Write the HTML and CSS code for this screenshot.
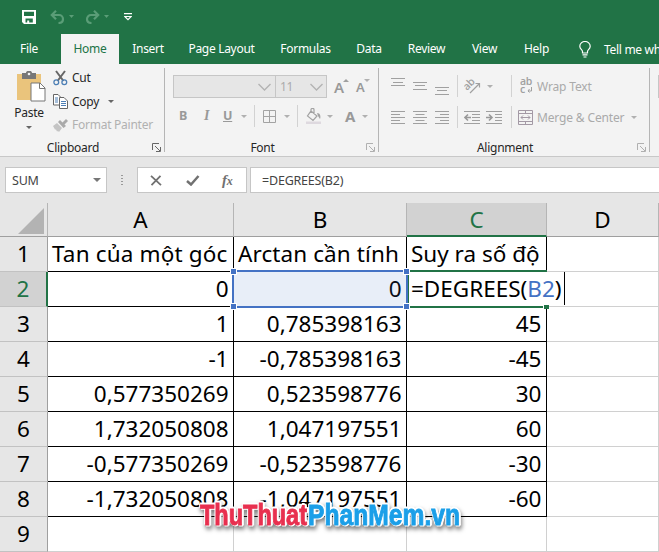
FILE: index.html
```html
<!DOCTYPE html>
<html lang="vi">
<head>
  <meta charset="UTF-8">
  <meta name="viewport" content="width=device-width, initial-scale=1.0">
  <title>Excel - DEGREES</title>
  <link rel="stylesheet" href="styles.css">
</head>
<body>
  <div class="excel">
    <!-- Quick access bar -->
    <div class="quick-bar">
      <svg class="icon-save" width="14" height="14" viewBox="0 0 14 14"><path d="M0 0h14v14H2L0 12zM2 1.7V6h10V1.7zM3.500 8.500v4h1.700v-2h2v2h3.600v-4z" fill="#fff" fill-rule="evenodd"/></svg>
      <svg class="icon-undo" width="26" height="14" viewBox="0 0 26 14"><path d="M6 .8L1.800 5 6 9.200M2 5H9a4 4 0 0 1 4 4c0 2.500-1.500 4-4.500 4" fill="none" stroke="#5a9d77" stroke-width="2.200"/><path d="M19 5h5l-2.500 3z" fill="#5a9d77"/></svg>
      <svg class="icon-redo" width="26" height="14" viewBox="0 0 26 14"><path d="M9 .8L13.200 5 9 9.200M13 5H6a4 4 0 0 0-4 4c0 2.500 1.500 4 4.500 4" fill="none" stroke="#5a9d77" stroke-width="2.200"/><path d="M19 5h5l-2.500 3z" fill="#5a9d77"/></svg>
      <svg class="icon-more" width="8" height="8" viewBox="0 0 8 8"><path d="M0 .6h8M.8 3.500L4 6.700 7.200 3.500z" fill="none" stroke="#fff" stroke-width="1.100"/></svg>
    </div>

    <!-- Tabs -->
    <div class="tabs">
      <span class="tab">File</span>
      <span class="tab active">Home</span>
      <span class="tab">Insert</span>
      <span class="tab">Page Layout</span>
      <span class="tab">Formulas</span>
      <span class="tab">Data</span>
      <span class="tab">Review</span>
      <span class="tab">View</span>
      <span class="tab">Help</span>
      <svg class="icon-bulb" width="12" height="17" viewBox="0 0 12 17"><path d="M3.500 12V10.500C3.500 9 .8 8 .8 5.200a5.200 4.700 0 0 1 10.400 0C11.200 8 8.500 9 8.500 10.500V12zM3.500 13.800h5M4.500 16h3" fill="none" stroke="#fff" stroke-width="1.200"/></svg>
      <span class="tell-me">Tell me what</span>
    </div>

    <!-- Ribbon -->
    <div class="ribbon">
      <div class="group clipboard">
        <div class="group-body">
          <div class="paste">
            <svg width="30" height="31" viewBox="0 0 30 31"><path d="M1 3h24v26H1z" fill="#eac47c"/><path d="M6 2h4c0-3 6-3 6 0h4v6H6z" fill="#777"/><circle cx="13" cy="3" r="1.300" fill="#f3f3f3"/><path d="M15 12h9l5 5v13H15z" fill="#fff" stroke="#777"/><path d="M23.500 12v5.500H29" fill="none" stroke="#777"/></svg>
            <span>Paste</span>
            <i class="arrow dark"></i>
          </div>
          <div class="clip-list">
            <div class="clip-item">
              <svg width="15" height="16" viewBox="0 0 15 16"><path d="M3 1l7.500 10M12 1L4.500 11" stroke="#666" stroke-width="2" fill="none"/><circle cx="3.300" cy="12.300" r="2.400" fill="none" stroke="#4d7fb5" stroke-width="1.300"/><circle cx="11.300" cy="12.300" r="2.400" fill="none" stroke="#4d7fb5" stroke-width="1.300"/></svg>
              <span>Cut</span>
            </div>
            <div class="clip-item">
              <svg width="15" height="15" viewBox="0 0 15 15"><path d="M.5.5H5L8.500 4v7H.5z" fill="#fff" stroke="#666"/><path d="M2 4h3M2 6h3M2 8h3" stroke="#4d7fb5"/><path d="M6.500 3.500H11l3.500 3.500v7.500h-8z" fill="#fff" stroke="#666"/><path d="M8 7.500h5M8 9.500h5M8 11.500h5" stroke="#4d7fb5"/></svg>
              <span>Copy</span>
              <i class="arrow dark"></i>
            </div>
            <div class="clip-item off">
              <svg width="15" height="14" viewBox="0 0 15 14"><path d="M0 8l4-3 5 5-3 4-1-1-1 .5-1-2-1 0z" fill="#c4c4c4"/><path d="M5 4l2-2 6 6-2.500 2z" fill="#aaa"/><path d="M9 5l4-4 2 2-4 4z" fill="#aaa"/></svg>
              <span>Format Painter</span>
            </div>
          </div>
        </div>
        <div class="group-name">Clipboard</div>
        <svg class="launcher dark" width="9" height="9" viewBox="0 0 9 9"><path d="M.5 7V.5H7M3 3l5 5M8.500 4v4.500H4" fill="none" stroke="currentColor"/></svg>
      </div>

      <div class="group font">
        <div class="font-row">
          <span class="combo name"><svg width="13" height="8" viewBox="0 0 13 8"><path d="M.5 1l6 6 6-6" fill="none" stroke="#b3b3b3" stroke-width="1.400"/></svg></span>
          <span class="combo size">11<svg width="13" height="8" viewBox="0 0 13 8"><path d="M.5 1l6 6 6-6" fill="none" stroke="#b3b3b3" stroke-width="1.400"/></svg></span>
          <span class="grow">A<i class="arrow up"></i></span>
          <span class="shrink">A<i class="arrow"></i></span>
        </div>
        <div class="style-row">
          <b>B</b>
          <em>I</em>
          <u>U</u>
          <i class="arrow"></i>
          <span class="sep"></span>
          <svg width="13" height="13" viewBox="0 0 13 13"><path d="M.5.5h12v12H.5zM6.500.5v12M.5 6.500h12" fill="none" stroke="#a3a3a3"/></svg>
          <i class="arrow"></i>
          <span class="sep"></span>
          <svg width="16" height="16" viewBox="0 0 16 16"><path d="M5 3l6 5-4 4.500L1.500 8zM5 5V1.500c0-1.500 3-1.500 3 0V6" fill="none" stroke="#a3a3a3" stroke-width="1.200"/><path d="M11 5c3 0 4 3 3 6l-2-3z" fill="#a3a3a3"/><path d="M0 13.500h15V16H0z" fill="#ded9df"/></svg>
          <i class="arrow"></i>
          <strong>A</strong>
          <i class="arrow"></i>
        </div>
        <div class="group-name">Font</div>
        <svg class="launcher" width="9" height="9" viewBox="0 0 9 9"><path d="M.5 7V.5H7M3 3l5 5M8.500 4v4.500H4" fill="none" stroke="currentColor"/></svg>
      </div>

      <div class="group alignment">
        <div class="align-row">
          <svg width="14" height="20" viewBox="0 0 14 20"><path d="M0 2.500h14M2 6.500h10M0 9.500h14" stroke="#a0a0a0"/></svg>
          <svg width="14" height="20" viewBox="0 0 14 20"><path d="M0 6.500h14M2 9.500h10M0 13.500h14" stroke="#a0a0a0"/></svg>
          <svg width="14" height="20" viewBox="0 0 14 20"><path d="M0 11.500h14M2 14.500h10M0 18.500h14" stroke="#a0a0a0"/></svg>
          <span class="sep"></span>
          <svg width="18" height="18" viewBox="0 0 18 18"><text class="icon-text" x="0" y="11" transform="rotate(-45 5 9)">ab</text><path d="M6 16L15 7M11.500 6.500h4v4" fill="none" stroke="#a0a0a0" stroke-width="1.200"/></svg>
          <i class="arrow"></i>
          <span class="sep"></span>
          <svg width="14" height="18" viewBox="0 0 14 18"><text class="icon-text" x="0" y="8">ab</text><text class="icon-text" x="0" y="16">c</text><path d="M11.500 10v4H8M9.500 12L8 14l1.500 1.500" fill="none" stroke="#a0a0a0"/></svg>
          <span class="label">Wrap Text</span>
        </div>
        <div class="align-row second">
          <svg width="14" height="13" viewBox="0 0 14 13"><path d="M0 .5h14M0 3.500h9M0 6.500h14M0 9.500h9M0 12.500h14" stroke="#a0a0a0"/></svg>
          <svg width="14" height="13" viewBox="0 0 14 13"><path d="M0 .5h14M2.500 3.500h9M0 6.500h14M2.500 9.500h9M0 12.500h14" stroke="#a0a0a0"/></svg>
          <svg width="14" height="13" viewBox="0 0 14 13"><path d="M0 .5h14M5 3.500h9M0 6.500h14M5 9.500h9M0 12.500h14" stroke="#a0a0a0"/></svg>
          <span class="sep"></span>
          <svg width="16" height="13" viewBox="0 0 16 13"><path d="M0 .5h16M8 3.500h8M8 6.500h8M8 9.500h8M0 12.500h16" stroke="#a0a0a0"/><path d="M7 6.500H1.500M4 3.500l-3 3 3 3" fill="none" stroke="#999" stroke-width="1.600"/></svg>
          <svg width="16" height="13" viewBox="0 0 16 13"><path d="M0 .5h16M9 3.500h7M9 6.500h7M9 9.500h7M0 12.500h16" stroke="#a0a0a0"/><path d="M0 6.500h5.500M3 3.500l3 3-3 3" fill="none" stroke="#999" stroke-width="1.600"/></svg>
          <span class="sep"></span>
          <svg width="15" height="15" viewBox="0 0 15 15"><path d="M.5.500h14v14H.5zM.5 3.500h14M.5 11.500h14M7.500.500v3M7.500 11.500v3" fill="none" stroke="#a399a5"/><path d="M3 7.500h9M5 5.500l-2 2 2 2M10 5.500l2 2-2 2" fill="none" stroke="#a399a5"/></svg>
          <span class="label">Merge &amp; Center</span>
          <i class="arrow"></i>
        </div>
        <div class="group-name">Alignment</div>
        <svg class="launcher" width="9" height="9" viewBox="0 0 9 9"><path d="M.5 7V.5H7M3 3l5 5M8.500 4v4.500H4" fill="none" stroke="currentColor"/></svg>
      </div>

      <div class="group number"><span class="combo"></span></div>
    </div>

    <!-- Formula bar -->
    <div class="formula-bar">
      <div class="name-box"><span>SUM</span><i class="arrow gray"></i></div>
      <div class="dots"><i></i><i></i><i></i><i></i></div>
      <div class="fx-buttons">
        <svg width="12" height="11" viewBox="0 0 12 11"><path d="M1 .8l10 9.400M10.500.8L1.500 10.200" stroke="#717171" stroke-width="1.800"/></svg>
        <svg width="14" height="11" viewBox="0 0 14 11"><path d="M1 6l4 3.500L12.500 1" fill="none" stroke="#717171" stroke-width="2.500"/></svg>
        <span class="fx">f<small>x</small></span>
      </div>
      <div class="formula">=DEGREES(B2)</div>
    </div>

    <!-- Sheet -->
    <div class="sheet">
      <div class="corner"><svg width="26" height="26" viewBox="0 0 26 26"><path d="M26 0v26H0z" fill="#b3b3b3"/></svg></div>
      <div class="col">A</div>
      <div class="col">B</div>
      <div class="col selected">C</div>
      <div class="col">D</div>

      <div class="row">1</div>
      <div class="cell title t-tan">Tan của một góc</div>
      <div class="cell title t-arctan">Arctan cần tính</div>
      <div class="cell title">Suy ra số độ</div>
      <div class="cell empty"></div>

      <div class="row selected">2</div>
      <div class="cell">0</div>
      <div class="cell">0<div class="ref-box"><i></i><i></i><i></i><i></i></div></div>
      <div class="cell editing">
        <div class="edit-box"></div>
        <div class="edit-text">=DEGREES(<span>B2</span>)</div>
      </div>
      <div class="cell empty"></div>

      <div class="row">3</div>
      <div class="cell">1</div>
      <div class="cell">0,785398163</div>
      <div class="cell">45</div>
      <div class="cell empty"></div>

      <div class="row">4</div>
      <div class="cell">-1</div>
      <div class="cell">-0,785398163</div>
      <div class="cell">-45</div>
      <div class="cell empty"></div>

      <div class="row">5</div>
      <div class="cell">0,577350269</div>
      <div class="cell">0,523598776</div>
      <div class="cell">30</div>
      <div class="cell empty"></div>

      <div class="row">6</div>
      <div class="cell">1,732050808</div>
      <div class="cell">1,047197551</div>
      <div class="cell">60</div>
      <div class="cell empty"></div>

      <div class="row">7</div>
      <div class="cell">-0,577350269</div>
      <div class="cell">-0,523598776</div>
      <div class="cell">-30</div>
      <div class="cell empty"></div>

      <div class="row">8</div>
      <div class="cell">-1,732050808</div>
      <div class="cell">-1,047197551</div>
      <div class="cell">-60</div>
      <div class="cell empty"></div>

      <div class="row">9</div>
      <div class="cell empty"></div>
      <div class="cell empty"></div>
      <div class="cell empty"></div>
      <div class="cell empty"></div>
    </div>

    <svg class="watermark" width="280" height="50" viewBox="0 0 280 50">
      <text x="10" y="35" textLength="107" lengthAdjust="spacingAndGlyphs" fill="#e8304f" stroke="#e8304f">ThuThuat</text>
      <text x="118" y="35" textLength="152" lengthAdjust="spacingAndGlyphs" fill="#1b9fe8" stroke="#1b9fe8">PhanMem.vn</text>
    </svg>
  </div>
</body>
</html>
```
FILE: styles.css
```css
* { box-sizing: border-box; margin: 0; padding: 0; }

body {
  font-family: 'Noto Sans', 'Open Sans', sans-serif;
  font-size: 12px;
  letter-spacing: -0.25px;
  color: #262626;
  overflow: hidden;
}

svg { display: block; flex: none; }

.excel {
  position: relative;
  width: 659px;
  height: 552px;
  overflow: hidden;
  background: #e6e6e6;
}

/* title and tabs */
.quick-bar {
  display: flex;
  align-items: center;
  height: 34px;
  padding: 0 0 1px 22px;
  background: #217346;
}

.icon-undo { margin-left: 14px; }
.icon-redo { margin-left: 9px; }
.icon-more { margin-left: 13px; }

.tabs {
  display: grid;
  grid-template-columns: 61px 58px 58px 89px 79px 48px 67px 49px 55px 40px 200px;
  align-items: center;
  height: 30px;
  background: #217346;
  color: #fff;
  letter-spacing: -0.3px;
  white-space: nowrap;
}

.tab {
  line-height: 30px;
  text-align: center;
}

.tab:first-child { padding-right: 3px; }

.tab.active {
  background: #f3f3f3;
  color: #217346;
}

.icon-bulb { margin-left: 15px; }

/* ribbon */
.ribbon {
  display: flex;
  height: 93px;
  padding-top: 4px;
  background: #f3f3f3;
  border-bottom: 1px solid #c8c8c8;
}

.group {
  position: relative;
  flex: none;
  height: 84px;
  border-right: 1px solid #b5b5b5;
}

.clipboard { width: 165px; }
.font { width: 214px; }
.alignment { width: 271px; }
.number { width: 60px; padding: 7px 0 0 8px; }

.group-name {
  position: absolute;
  left: 0;
  right: 18px;
  bottom: -4px;
  line-height: 16px;
  text-align: center;
}

.launcher {
  position: absolute;
  right: 3px;
  bottom: 0;
  color: #b0b0b0;
}

.launcher.dark { color: #666; }

.arrow {
  flex: none;
  width: 0;
  height: 0;
  border: 3px solid transparent;
  border-top: 3px solid #b0b0b0;
  border-bottom: none;
}

.arrow.dark { border-top-color: #666; }

.arrow.up {
  border-top: none;
  border-bottom: 3px solid #a0a0a0;
}

.group-body {
  display: flex;
  padding: 3px 0 0 16px;
}

.paste {
  display: flex;
  flex-direction: column;
  align-items: center;
  width: 30px;
}

.paste span { margin-left: -4px; line-height: 22px; }
.paste .arrow { margin: 2px 5px 0 0; }

.clip-list {
  padding-left: 7px;
  margin-top: -5px;
}

.clip-item {
  display: flex;
  align-items: center;
  gap: 4px;
  height: 23.5px;
  white-space: nowrap;
}

.clip-item .arrow { margin-left: 5px; }
.clip-item.off { color: #b1b1b1; }

.combo {
  display: flex;
  align-items: center;
  justify-content: flex-end;
  height: 23px;
  padding-right: 4px;
  background: #e6e6e6;
  border: 1px solid #c6c6c6;
}

.combo.size {
  justify-content: space-between;
  margin-left: -1px;
  padding-left: 4px;
  padding-right: 3px;
}

.number .combo { width: 60px; }

.font-row {
  display: grid;
  grid-template-columns: 103px 51px 22px 20px;
  padding: 7px 0 0 8px;
  color: #ababab;
}

.grow, .shrink {
  display: flex;
  padding-left: 7px;
  color: #999;
  font-size: 15px;
  font-weight: 600;
  line-height: 24px;
}

.shrink { font-size: 13px; line-height: 25px; }
.grow .arrow, .shrink .arrow { margin: 4px 0 0 -1px; }

.style-row {
  display: grid;
  grid-template-columns: 22px 22px 18px 13px 9px 21px 13px 9px 21px 18px 17px 8px;
  align-items: center;
  height: 22px;
  margin-top: 9px;
  padding-left: 14px;
  color: #999;
  font-size: 12.5px;
}

/* lines up the letters with the icons next to them */
.style-row b, .style-row em, .style-row u, .style-row strong { line-height: 18px; }
.style-row em { font-family: 'Liberation Serif', serif; font-size: 14px; font-weight: bold; padding-left: 3px; }
.style-row u { font-weight: bold; }
.style-row strong { font-size: 15px; }

.font .style-row { margin-top: 4px; padding-top: 1px; }

.sep {
  width: 1px;
  height: 22px;
  background: #d2d2d2;
}

.align-row {
  display: grid;
  grid-template-columns: 22px 22px 22px 7px 23px 24px 9px 17px 94px 10px;
  align-items: center;
  height: 22px;
  margin-top: 7px;
  padding-left: 12px;
  white-space: nowrap;
}

.align-row.second {
  grid-template-columns: 22px 22px 22px 7px 22px 25px 7px 19px 94px 10px;
  margin-top: 9px;
}

.label { color: #aaa; letter-spacing: -0.15px; }

.icon-text {
  font: 600 10.5px 'Open Sans', sans-serif;
  fill: #a0a0a0;
}

/* formula bar */
.formula-bar {
  display: flex;
  height: 46px;
  padding: 10px 0 10px 5px;
}

.name-box, .fx-buttons, .formula {
  display: flex;
  align-items: center;
  height: 26px;
  background: #fff;
  border: 1px solid #c6c6c6;
  color: #444;
  font-size: 12.5px;
  letter-spacing: -0.2px;
}

.name-box {
  justify-content: space-between;
  width: 102px;
  padding: 0 5px 0 6px;
}

.arrow.gray {
  border-left-width: 4px;
  border-right-width: 4px;
  border-top: 4px solid #777;
}

.dots {
  display: flex;
  flex-direction: column;
  justify-content: center;
  gap: 2px;
  width: 30px;
  align-items: center;
}

.dots i { width: 2px; height: 1px; background: #999; }

.fx-buttons {
  width: 110px;
  padding-left: 12px;
  gap: 24px;
}

.fx {
  margin-left: -2px;
  font-family: 'Liberation Serif', serif;
  font-style: italic;
  font-weight: bold;
  font-size: 15px;
  color: #717171;
}

.fx small { font-size: 12px; }

.formula {
  flex: 1;
  margin-left: 3px;
  padding-left: 11px;
  border-right: none;
}

/* sheet */
.sheet {
  display: grid;
  grid-template-columns: 48px 186px 173px 140px 112px;
  grid-template-rows: 34px repeat(9, 35px);
  font-size: 22.5px;
  letter-spacing: 0;
  line-height: 34px;
  color: #000;
}

.corner, .col, .row {
  background: #e6e6e6;
  border-right: 1px solid #b5b5b5;
  border-bottom: 1px solid #9f9f9f;
  text-align: center;
}

.corner svg { margin: 5px 0 0 18px; }

.row { border-bottom-color: #c2c2c2; border-right-color: #9f9f9f; }

.col.selected {
  background: #d2d2d2;
  color: #217346;
  border-bottom: 2px solid #217346;
}

.row.selected {
  background: #d2d2d2;
  color: #217346;
  border-right: 2px solid #217346;
}

.cell {
  position: relative;
  background: #fff;
  border-right: 1px solid #000;
  border-bottom: 1px solid #000;
  padding-right: 4.5px;
  text-align: right;
  white-space: nowrap;
}

.cell.title { text-align: left; padding: 0 0 0 4px; }
.cell.empty { border-color: #d0d0d0; }

.t-tan { letter-spacing: 0.15px; }
.t-arctan { letter-spacing: 0.1px; }

/* range referenced by the formula */
.ref-box {
  position: absolute;
  inset: -2px;
  border: 2px solid #4472c4;
  background: rgba(68, 114, 196, 0.12);
  z-index: 2;
}

.ref-box i {
  position: absolute;
  width: 7px;
  height: 7px;
  background: #4472c4;
  border: 1px solid #fff;
}

.ref-box i:nth-child(1) { left: -4px; top: -4px; }
.ref-box i:nth-child(2) { right: -4px; top: -4px; }
.ref-box i:nth-child(3) { left: -4px; bottom: -4px; }
.ref-box i:nth-child(4) { right: -4px; bottom: -4px; }

/* cell being edited, text runs over column D */
.edit-box {
  position: absolute;
  inset: -2px -1px -2px 0;
  border: 2px solid #217346;
  border-right: none;
  z-index: 1;
}

.edit-box::after {
  content: '';
  position: absolute;
  right: -2px;
  bottom: -3px;
  width: 5px;
  height: 4px;
  background: #217346;
  border-left: 1px solid #fff;
}

.edit-text {
  position: absolute;
  left: 2px;
  top: 0;
  width: 156px;
  height: 33px;
  padding-left: 2px;
  background: #fff;
  border-right: 1px solid #000;
  text-align: left;
  z-index: 1;
}

.edit-text span { color: #4472c4; }

.watermark {
  position: absolute;
  left: 190px;
  top: 490px;
  z-index: 3;
  filter: drop-shadow(1px 1px 0 #fff) drop-shadow(-1px -1px 0 #fff) drop-shadow(1px -1px 0 #fff) drop-shadow(1px 3px 2px rgba(0, 0, 0, 0.5));
}

.watermark text {
  font: bold 30px 'Liberation Sans Narrow', 'Liberation Sans', sans-serif;
  stroke-width: 0.9px;
  letter-spacing: 0;
}
```
